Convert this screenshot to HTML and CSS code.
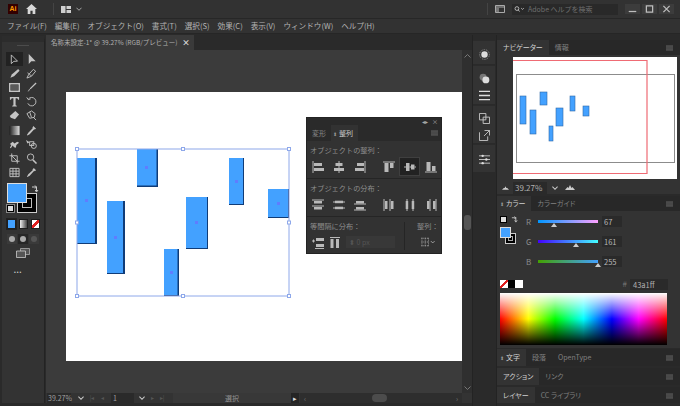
FILE: index.html
```html
<!DOCTYPE html>
<html lang="ja">
<head>
<meta charset="utf-8">
<title>Illustrator</title>
<link rel="stylesheet" href="styles.css">
</head>
<body>
<svg class="defs" width="0" height="0">
  <defs>
    <g id="a1"><path d="M1 0v12" /><rect x="2" y="2" width="8" height="3" class="f"/><rect x="2" y="7" width="10" height="3" class="f"/></g>
    <g id="a2"><path d="M6 0v12"/><rect x="2.5" y="2" width="7" height="3" class="f"/><rect x="1" y="7" width="10" height="3" class="f"/></g>
    <g id="a3"><path d="M11 0v12"/><rect x="3" y="2" width="7" height="3" class="f"/><rect x="1" y="7" width="9" height="3" class="f"/></g>
    <g id="a4"><path d="M0 1h12"/><rect x="1.5" y="2" width="4" height="9" class="f"/><rect x="7" y="2" width="3.500" height="5" class="f"/></g>
    <g id="a5"><path d="M0 6h2M10.500 6h1.500M5.500 6h1.500"/><rect x="2" y="2" width="3.500" height="8" class="f"/><rect x="7" y="3.500" width="3.500" height="5" class="f"/></g>
    <g id="a6"><path d="M0 11h12"/><rect x="1.500" y="1" width="4" height="9" class="f"/><rect x="7" y="5" width="3.500" height="5" class="f"/></g>
    <g id="d1"><path d="M0 1h12M0 7h12"/><rect x="2" y="2" width="8" height="2.500" class="f"/><rect x="2" y="8" width="8" height="2.500" class="f"/></g>
    <g id="d2"><path d="M0 3h12M0 9h12"/><rect x="2" y="1.700" width="8" height="2.500" class="f"/><rect x="2" y="7.700" width="8" height="2.500" class="f"/></g>
    <g id="d3"><path d="M0 5h12M0 11h12"/><rect x="2" y="2" width="8" height="2.500" class="f"/><rect x="2" y="8" width="8" height="2.500" class="f"/></g>
    <g id="d4"><path d="M1 0v12M7 0v12"/><rect x="2" y="2" width="2.500" height="8" class="f"/><rect x="8" y="2" width="2.500" height="8" class="f"/></g>
    <g id="d5"><path d="M3 0v12M9 0v12"/><rect x="1.700" y="2" width="2.500" height="8" class="f"/><rect x="7.700" y="2" width="2.500" height="8" class="f"/></g>
    <g id="d6"><path d="M5 0v12M11 0v12"/><rect x="2" y="2" width="2.500" height="8" class="f"/><rect x="8" y="2" width="2.500" height="8" class="f"/></g>
    <g id="burger"><path d="M0 1h9M0 3.500h9M0 6h9"/></g>
  </defs>
</svg>

<header class="titlebar">
  <span class="ai">Ai</span>
  <svg class="home" viewBox="0 0 12 11"><path d="M6 0 0 5.500h1.800V11h3V7.500h2.400V11h3V5.500H12z"/></svg>
  <span class="vsep"></span>
  <svg class="layout-ic" viewBox="0 0 10 7"><path d="M0 0h4.500v7H0zM5.500 0H10v3H5.500zM5.500 4H10v3H5.500z"/></svg>
  <svg class="chev" viewBox="0 0 7 4"><path d="M.5.500 3.500 3.500 6.500.500"/></svg>
  <span class="spacer"></span>
  <span class="vsep"></span>
  <svg class="panel-ic" viewBox="0 0 10 8"><path d="M.5.500h9v7h-9z M.5 2h9" /><path class="solid" d="M1 2.500h3V7H1z"/></svg>
  <div class="search">
    <svg viewBox="0 0 12 7"><circle cx="3" cy="3" r="2.200"/><path d="M4.500 4.500 6 6.500M8 2.500l1.500 1.500L11 2.500"/></svg>
    <span>Adobe ヘルプを検索</span>
  </div>
  <div class="winbtns">
    <svg viewBox="0 0 8 8"><path d="M1 6h6"/></svg>
    <svg viewBox="0 0 8 8"><path d="M1.500 1.500h5v5h-5z"/></svg>
    <svg viewBox="0 0 8 8"><path d="M1.500 1.500l5 5M6.500 1.500l-5 5"/></svg>
  </div>
</header>

<nav class="menubar">
  <span>ファイル(F)</span><span>編集(E)</span><span>オブジェクト(O)</span><span>書式(T)</span><span>選択(S)</span><span>効果(C)</span><span>表示(V)</span><span>ウィンドウ(W)</span><span>ヘルプ(H)</span>
</nav>

<main class="workspace">
  <aside class="toolbar">
    <div class="grip"></div>
    <div class="tools">
      <button class="tool on"><svg viewBox="0 0 12 12"><path class="ln" d="M2.500 1v9.500l2.800-2.500 4-.2z"/></svg></button>
      <button class="tool"><svg viewBox="0 0 12 12"><path d="M3 0v11l2.800-3 4.700-.2z"/></svg></button>
      <button class="tool"><svg viewBox="0 0 12 12"><path d="M10 1l1.500 2-6 6-4 1.500L3 7z"/></svg></button>
      <button class="tool"><svg viewBox="0 0 12 12"><path class="ln" d="M1 11 3 7l5-5.500 2.500 2L6 9zM2 5c1 2 2 3 4 3"/></svg></button>
      <button class="tool"><svg viewBox="0 0 12 12"><path class="ln2" d="M.8 1.800h10.400v8.400H.8z"/><path class="dim" d="M2 3h8v6H2z"/></svg></button>
      <button class="tool"><svg viewBox="0 0 12 12"><path d="M10.500.500 11.500 1.500 5 8 4 7zM3.500 7.500l1 1-2.800 2.500z"/></svg></button>
      <button class="tool"><svg viewBox="0 0 12 12"><path d="M1 1h10v3h-1L9 2.500H7.200V10L8.500 10.700V11.500h-5v-.8L4.800 10V2.500H3L2 4H1z"/></svg></button>
      <button class="tool"><svg viewBox="0 0 12 12"><path class="ln" d="M2.500 3.500A4.600 4.600 0 1 1 2 8M.8 1.500 2.500 4l2.500-.8"/></svg></button>
      <button class="tool"><svg viewBox="0 0 12 12"><path d="M7 1l4 4-4.500 5L2 8.500.8 6.500z"/></svg></button>
      <button class="tool"><svg viewBox="0 0 12 12"><path class="ln" d="M1 4 6 1l4 3-1 4-5 1zM4 2l2 6M8 8l3 3"/></svg></button>
      <button class="tool"><svg viewBox="0 0 12 12"><defs><linearGradient id="gr"><stop offset="0" stop-color="#222"/><stop offset="1" stop-color="#ddd"/></linearGradient></defs><rect x=".5" y="1" width="11" height="10" fill="url(#gr)"/></svg></button>
      <button class="tool"><svg viewBox="0 0 12 12"><path d="M8 1l3 3-1.500 1-.5-.3L4 10 1.500 11.500 1 11l1.500-2.500L7.300 3.500 7 3z"/></svg></button>
      <button class="tool"><svg viewBox="0 0 12 12"><path d="M1 5.500 4 3l2 2 3-2 2 1-3 2.500-.5 3-2-.5L4 7l-2 3-1-.5 1.500-3z"/></svg></button>
      <button class="tool"><svg viewBox="0 0 12 12"><path d="M0 1l4 2.500L1.500 5z"/><rect class="ln" x="4" y="3" width="4.500" height="4"/><circle class="ln" cx="8.500" cy="7.500" r="2.800"/></svg></button>
      <button class="tool"><svg viewBox="0 0 12 12"><path class="ln" d="M3 .5V9h8.500M.5 3H9v8.500M3 3l6 6"/></svg></button>
      <button class="tool"><svg viewBox="0 0 12 12"><circle class="ln" cx="5" cy="4.500" r="3.500"/><path class="ln2" d="M7.500 7.500 11.500 11.500"/></svg></button>
      <button class="tool"><svg viewBox="0 0 12 12"><path class="ln" d="M1 1.500h10v9H1zM1 4.500h10M1 7.500h10M4.300 1.500v9M7.700 1.500v9"/></svg></button>
      <button class="tool"><svg viewBox="0 0 12 12"><path d="M8.500 1l2.500 2.500-1.500 1-.5-.3L4 9.500 1.500 11 1 10.500l1.500-2.500L7.300 3.500 7 3z"/></svg></button>
    </div>
    <div class="swatches">
      <span class="stroke"><i></i></span>
      <span class="fill"></span>
      <svg class="swap" viewBox="0 0 8 8"><path d="M1 2h4.500v4M4 .5 5.500 2 4 3.500M4.200 5 5.500 7 7 5"/></svg>
      <span class="deflt"></span>
    </div>
    <div class="modes">
      <span class="m1"></span><span class="m2"></span>
      <span class="m3"></span>
    </div>
    <div class="draws">
      <span><i></i></span><span class="sel"><i></i></span><span class="off"><i></i></span>
    </div>
    <svg class="screen" viewBox="0 0 14 10"><path class="b" d="M4.500 .5h9v6h-9z"/><path class="c" d="M.5 3h9v6.500h-9z"/></svg>
    <div class="more">•••</div>
  </aside>

  <section class="doc">
    <div class="tabs">
      <div class="doctab"><span>名称未設定-1* @ 39.27% (RGB/プレビュー)</span><b>×</b></div>
    </div>
    <div class="stage">
      <div class="canvas">
        <svg class="art" viewBox="0 0 416 343" width="416" height="343">
          <rect x="20" y="42" width="396" height="269" fill="#fff"/>
          <g transform="translate(-46 -50)">
            <g class="bar"><rect x="77" y="158" width="20" height="86" class="bd"/><rect x="77" y="158" width="18" height="85" class="bf"/><rect x="85" y="199" width="3" height="3" class="dot"/></g>
            <g class="bar"><rect x="107" y="201" width="18" height="73" class="bd"/><rect x="107" y="201" width="16" height="72" class="bf"/><rect x="114" y="236" width="3" height="3" class="dot"/></g>
            <g class="bar"><rect x="137" y="149" width="21" height="38" class="bd"/><rect x="137" y="149" width="19.500" height="36.500" class="bf"/><rect x="145" y="166" width="3" height="3" class="dot"/></g>
            <g class="bar"><rect x="164" y="249" width="15" height="47" class="bd"/><rect x="164" y="249" width="13.500" height="46" class="bf"/><rect x="170" y="271" width="3" height="3" class="dot"/></g>
            <g class="bar"><rect x="186" y="197" width="22" height="52" class="bd"/><rect x="186" y="197" width="21" height="51" class="bf"/><rect x="195" y="221" width="3" height="3" class="dot"/></g>
            <g class="bar"><rect x="229" y="158" width="15" height="47" class="bd"/><rect x="229" y="158" width="14" height="46" class="bf"/><rect x="235" y="180" width="3" height="3" class="dot"/></g>
            <g class="bar"><rect x="268" y="189" width="21" height="29" class="bd"/><rect x="268" y="189" width="20" height="28" class="bf"/><rect x="277" y="202" width="3" height="3" class="dot"/></g>
            <rect class="sel" x="77" y="149" width="212" height="147"/>
            <g class="hnd">
              <rect x="75.500" y="147.500" width="3" height="3"/><rect x="181.500" y="147.500" width="3" height="3"/><rect x="287.500" y="147.500" width="3" height="3"/>
              <rect x="75.500" y="221" width="3" height="3"/><rect x="287.500" y="221" width="3" height="3"/>
              <rect x="75.500" y="294.500" width="3" height="3"/><rect x="181.500" y="294.500" width="3" height="3"/><rect x="287.500" y="294.500" width="3" height="3"/>
            </g>
          </g>
        </svg>

        <div class="float">
          <div class="float-top"><span>◂▸</span><span>×</span></div>
          <div class="float-tabs">
            <span class="t">変形</span><span class="t active"><em>⬍</em>整列</span>
            <svg class="burger" viewBox="0 0 9 7"><use href="#burger"/></svg>
          </div>
          <div class="sec">
            <h4>オブジェクトの整列：</h4>
            <div class="row">
              <button><svg viewBox="0 0 12 12"><use href="#a1"/></svg></button><button><svg viewBox="0 0 12 12"><use href="#a2"/></svg></button><button><svg viewBox="0 0 12 12"><use href="#a3"/></svg></button>
              <button class="gap"><svg viewBox="0 0 12 12"><use href="#a4"/></svg></button><button class="act"><svg viewBox="0 0 12 12"><use href="#a5"/></svg></button><button><svg viewBox="0 0 12 12"><use href="#a6"/></svg></button>
            </div>
          </div>
          <div class="sec">
            <h4>オブジェクトの分布：</h4>
            <div class="row">
              <button><svg viewBox="0 0 12 12"><use href="#d1"/></svg></button><button><svg viewBox="0 0 12 12"><use href="#d2"/></svg></button><button><svg viewBox="0 0 12 12"><use href="#d3"/></svg></button>
              <button class="gap"><svg viewBox="0 0 12 12"><use href="#d4"/></svg></button><button><svg viewBox="0 0 12 12"><use href="#d5"/></svg></button><button><svg viewBox="0 0 12 12"><use href="#d6"/></svg></button>
            </div>
          </div>
          <div class="sec last">
            <div class="col-a">
              <h4>等間隔に分布：</h4>
              <div class="row tight">
                <button><svg viewBox="0 0 12 12"><path d="M0 4h3M1.500 2.500v3" /><rect x="4" y="1" width="8" height="3" class="f"/><rect x="4" y="7" width="8" height="3" class="f"/><path d="M3 11.500h9"/></svg></button>
                <button><svg viewBox="0 0 12 12"><path d="M1 .5h10"/><rect x="1.500" y="2" width="3" height="9" class="f"/><rect x="7" y="2" width="3" height="9" class="f"/></svg></button>
                <div class="spin">⬍ 0 px</div>
              </div>
            </div>
            <div class="col-b">
              <h4>整列：</h4>
              <svg class="dist" viewBox="0 0 16 10"><path d="M.5 1h8M.5 5h8M.5 9h8M1 .5v9M4.500 .5v9M8 .5v9" stroke-dasharray="1 1"/><path d="M10.500 4l2 2 2-2"/></svg>
            </div>
          </div>
        </div>
      </div>
      <div class="vscroll">
        <svg viewBox="0 0 7 4"><path d="M.5 3.500 3.500.5 6.500 3.500"/></svg>
        <i></i>
        <svg viewBox="0 0 7 4"><path d="M.5.500 3.500 3.500 6.500.500"/></svg>
      </div>
    </div>
    <footer class="status">
      <span class="z">39.27%</span>
      <svg class="cv" viewBox="0 0 7 4"><path d="M.5.500 3.500 3.500 6.500.500"/></svg>
      <span class="pg dimtxt">|◂</span><span class="pg dimtxt">◂</span>
      <span class="p1">1</span>
      <svg class="cv" viewBox="0 0 7 4"><path d="M.5.500 3.500 3.500 6.500.500"/></svg>
      <span class="pg dimtxt">▸</span><span class="pg dimtxt">▸|</span>
      <span class="tool-name">選択</span>
      <span class="play">▸</span>
      <div class="hscroll"><em>‹</em><i></i><em>›</em></div>
    </footer>
  </section>

  <aside class="dock">
    <div class="dgrp g1"><svg viewBox="0 0 12 12"><circle cx="6" cy="6" r="3.500" class="s"/><circle cx="6" cy="6" r="5.300" class="dash"/></svg></div>
    <div class="dgrp g2">
      <svg viewBox="0 0 12 12"><circle cx="4.500" cy="4.500" r="3.800" class="dimf"/><circle cx="7.500" cy="7.500" r="3.800" class="s"/></svg>
      <svg viewBox="0 0 12 12"><path d="M0 1.500h12M0 6h12M0 10.500h12" class="l2"/></svg>
    </div>
    <div class="dgrp g3">
      <svg viewBox="0 0 12 12"><path d="M.5 .5h7v7h-7zM4.500 4.500h7v7h-7z" class="l"/></svg>
      <svg viewBox="0 0 12 12"><path d="M.5 2.500v9h9V7M6 .5h5.500V6M11.500 .5 5.500 6.500" class="l"/></svg>
    </div>
    <div class="dgrp g4"><svg viewBox="0 0 12 12"><path d="M0 2h12M0 6h12M0 10h12" class="l"/><circle cx="4" cy="2" r="1.300" class="s"/><circle cx="8" cy="6" r="1.300" class="s"/><circle cx="4" cy="10" r="1.300" class="s"/></svg></div>
  </aside>

  <aside class="panels">
    <div class="ptabs nav-tabs">
      <span class="pt active">ナビゲーター</span><span class="pt">情報</span>
      <svg class="burger" viewBox="0 0 9 7"><use href="#burger"/></svg>
    </div>
    <div class="navbody">
      <svg class="preview" viewBox="0 0 164 122" width="164" height="122">
        <rect width="164" height="122" fill="#fff"/>
        <g class="pv">
          <rect x="7" y="39" width="6" height="28"/><rect x="17" y="53" width="6" height="24"/><rect x="27" y="35" width="7" height="13"/>
          <rect x="36" y="69" width="4" height="15"/><rect x="43" y="51" width="7" height="18"/><rect x="57" y="39" width="5" height="15"/><rect x="70" y="49" width="6" height="10"/>
        </g>
        <rect x="3.500" y="17.500" width="158" height="88" fill="none" stroke="#8c8c8c"/>
        <path d="M0 3.500H134V116.500H0" fill="none" stroke="#ef6b74" stroke-width="1.200"/>
      </svg>
      <div class="navzoom">
        <svg class="mt" viewBox="0 0 8 4"><path d="M0 4 2 2h1l1-2 1 2h1l2 2z"/></svg>
        <span class="z2">39.27%</span>
        <svg class="cv" viewBox="0 0 7 4"><path d="M.5.500 3.500 3.500 6.500.500"/></svg>
        <svg class="mt big" viewBox="0 0 10 5"><path d="M0 5 2.500 2 3.500 3 5 0 6.500 3 7.500 2 10 5z"/></svg>
      </div>
    </div>
    <div class="ptabs color-tabs">
      <span class="pt active"><em>⬍</em>カラー</span><span class="pt">カラーガイド</span>
      <svg class="burger" viewBox="0 0 9 7"><use href="#burger"/></svg>
    </div>
    <div class="colorbody">
      <div class="cc">
        <div class="mini">
          <span class="deflt2"></span>
          <svg class="swap2" viewBox="0 0 8 8"><path d="M1 2h4.500v4M4 .5 5.500 2 4 3.500M4.200 5 5.500 7 7 5"/></svg>
          <span class="mstroke"></span><span class="mfill"></span>
        </div>
        <div class="sliders">
          <div class="sl"><label>R</label><div class="track tr"><i class="knob kr"></i></div><span class="val">67</span></div>
          <div class="sl"><label>G</label><div class="track tg"><i class="knob kg"></i></div><span class="val">161</span></div>
          <div class="sl"><label>B</label><div class="track tb"><i class="knob kb"></i></div><span class="val">255</span></div>
        </div>
      </div>
      <div class="hexrow">
        <span class="chip none"></span><span class="chip black"></span><span class="chip white"></span>
        <span class="spacer"></span>
        <span class="hash">#</span><span class="hex">43a1ff</span>
      </div>
      <div class="spectrum"></div>
    </div>
    <div class="ptabs t1"><span class="pt active"><em>⬍</em>文字</span><span class="pt">段落</span><span class="pt">OpenType</span><svg class="burger" viewBox="0 0 9 7"><use href="#burger"/></svg></div>
    <div class="ptabs t2"><span class="pt active">アクション</span><span class="pt">リンク</span><svg class="burger" viewBox="0 0 9 7"><use href="#burger"/></svg></div>
    <div class="ptabs t3"><span class="pt active">レイヤー</span><span class="pt">CC ライブラリ</span><svg class="burger" viewBox="0 0 9 7"><use href="#burger"/></svg></div>
  </aside>
</main>
</body>
</html>
```
FILE: styles.css
```css
* { box-sizing: border-box; }
html, body { margin: 0; padding: 0; }
body {
  width: 680px; height: 406px; overflow: hidden;
  background: #2a2a2a; color: #b8b8b8;
  font: 8px/1 "Noto Sans CJK JP", "Noto Sans", sans-serif;
  display: flex; flex-direction: column;
}
.defs { position: absolute; }
.defs .f, svg .f { fill: #b9b9b9; stroke: none; }
button { all: unset; display: flex; align-items: center; justify-content: center; }
em { font-style: normal; }
.spacer { flex: 1; }

.titlebar {
  height: 19px; flex: none; background: #323232; border-bottom: 1px solid #272727;
  display: flex; align-items: center; padding-left: 8px;
}
.ai { width: 10px; height: 10px; background: #330000; color: #ff9a00; font: bold 7px/10px "Liberation Sans", sans-serif; text-align: center; }
.home { width: 11px; height: 10px; fill: #d8d8d8; margin-left: 8px; }
.vsep { width: 1px; height: 12px; background: #444; margin-left: 16px; }
.layout-ic { width: 10px; height: 7px; fill: #cfcfcf; margin-left: 7px; }
.chev { width: 6px; height: 4px; fill: none; stroke: #bbb; margin-left: 5px; }
.titlebar .spacer + .vsep { margin: 0; }
.panel-ic { width: 10px; height: 8px; fill: none; stroke: #c8c8c8; stroke-width: .8; margin-left: 7px; }
.panel-ic .solid { fill: #777; stroke: none; }
.search { width: 106px; height: 11px; background: #292929; margin-left: 7px; display: flex; align-items: center; padding-left: 2px; color: #6f6f6f; font-size: 7px; }
.search svg { width: 11px; height: 6px; fill: none; stroke: #c8c8c8; margin-right: 3px; }
.winbtns { display: flex; gap: 2px; margin-left: 7px; margin-right: 6px; }
.winbtns svg { width: 15px; height: 10px; background: #3c3c3c; fill: none; stroke: #bdbdbd; }

.menubar {
  height: 15px; flex: none; background: #323232; border-bottom: 1px solid #262626;
  display: flex; align-items: center; gap: 8px; padding-left: 7px; color: #b4b4b4; font-size: 7.6px;
}

.workspace { flex: 1; display: flex; min-height: 0; padding-top: 1px; }

.toolbar { flex: none; background: #333; margin: 1px 0 3px 2px; width: 43px; display: flex; flex-direction: column; position: relative; border-top: 6px solid #2c2c2c; border-right: 1px solid #232323; }
.grip { width: 12px; height: 1px; background: #4c4c4c; margin: 3px 0 0 15px; }
.tools { display: grid; grid-template-columns: repeat(2, 17px); grid-auto-rows: 14.2px; margin: 6px 0 0 4px; }
.tool { width: 17px; height: 14.2px; }
.tool svg { width: 11px; height: 11px; fill: #c4c4c4; }
.tool.on { background: #222; }
.tool .ln { fill: none; stroke: #c4c4c4; stroke-width: 1; }
.tool .ln2 { fill: none; stroke: #c4c4c4; stroke-width: 1.600; }
.tool .dim { fill: #5a5a5a; }

.swatches { position: relative; height: 34px; margin-top: 3px; }
.fill { position: absolute; left: 5px; top: 0; width: 20px; height: 20px; background: #43a1ff; border: 1px solid #ddd; }
.stroke { position: absolute; left: 15px; top: 10px; width: 20px; height: 20px; background: #000; border: 1px solid #ccc; padding: 4px; }
.stroke i { display: block; width: 100%; height: 100%; border: 1px solid #bbb; }
.swap { position: absolute; left: 29px; top: 2px; width: 8px; height: 8px; fill: none; stroke: #ccc; }
.deflt { position: absolute; left: 5px; top: 22px; width: 7px; height: 7px; background: #ddd; border: 1px solid #000; outline: 1px solid #888; }
.modes { display: flex; gap: 2px; margin: 2px 0 0 5px; }
.modes span { width: 9px; height: 10px; border: 1px solid #1e1e1e; }
.m1 { background: #43a1ff; outline: 1px solid #222; }
.m2 { background: linear-gradient(90deg, #eee, #444); }
.m3 { background: linear-gradient(135deg, #fff 38%, #e02020 38%, #e02020 62%, #fff 62%); }
.modes span + span { margin-left: 1px; }
.draws { display: flex; gap: 1px; margin: 5px 0 0 5px; }
.draws span { width: 10px; height: 10px; display: flex; align-items: center; justify-content: center; background: #3a3a3a; }
.draws span.sel { background: #262626; }
.draws i { width: 6px; height: 6px; border-radius: 50%; background: #aaa; }
.draws .off i { background: #555; }
.screen { width: 14px; height: 10px; margin: 4px 0 0 14px; flex: none; }
.screen .b { fill: #555; stroke: #bbb; stroke-width: .7; }
.screen .c { fill: #555; stroke: #ddd; stroke-width: .7; }
.more { margin: 12px 0 0 12px; font: 5px/5px "Liberation Sans", sans-serif; letter-spacing: 1px; color: #ccc; }

.doc { width: 426px; flex: none; margin-left: 1px; display: flex; flex-direction: column; }
.tabs { height: 15px; flex: none; background: #2a2a2a; }
.doctab { width: 148px; height: 15px; background: #3a3a3a; display: flex; align-items: center; padding-left: 5px; font-size: 6.5px; color: #b0b0b0; white-space: nowrap; }
.doctab b { margin-left: auto; margin-right: 4px; color: #ddd; font-size: 8px; }
.stage { flex: 1; display: flex; min-height: 0; }
.canvas { width: 416px; background: #3b3b3b; position: relative; overflow: hidden; }
.art { display: block; }
.bd { fill: #103c78; }
.bf { fill: #43a1ff; }
.dot { fill: #5f7dff; }
.sel { fill: none; stroke: #8ea8ea; stroke-width: 1; }
.hnd rect { fill: #fff; stroke: #8ea8ea; stroke-width: 1; }

.float {
  position: absolute; left: 260px; top: 67px; width: 136px; height: 137px;
  background: #323232; border: 1px solid #232323; color: #8e8e8e;
}
.float-top { height: 7px; display: flex; justify-content: flex-end; gap: 4px; padding-right: 3px; font-size: 6px; line-height: 7px; color: #aaa; background: #2a2a2a; }
.float-tabs { height: 16px; background: #2a2a2a; display: flex; align-items: stretch; padding-left: 5px; position: relative; font-size: 7px; }
.t { display: flex; align-items: center; padding: 0 5px 0 0; color: #888; margin-right: 0; }
.t.active { background: #323232; color: #d0d0d0; padding: 0 4px 0 2px; margin: 0; width: 27px; justify-content: flex-start; }
.t em { font-size: 5px; margin-right: 2px; color: #999; }
.burger { width: 7px; height: 6px; fill: none; stroke: #7c7c7c; position: absolute; right: 3px; top: 5px; }
.sec { height: 38px; padding-top: 5px; border-bottom: 1px solid #252525; }
.sec.last { border: 0; display: flex; }
h4 { margin: 0 0 0 3px; font-weight: 400; font-size: 7.2px; line-height: 9px; color: #8e8e8e; }
.row { display: flex; margin-top: 2px; height: 19px; }
.row button { width: 21px; height: 19px; }
.row button svg { width: 12px; height: 12px; fill: none; stroke: #b9b9b9; }
.row button.gap { margin-left: 8px; }
.row button.act { background: #222; outline: 1px solid #3f3f3f; outline-offset: -1px; }
.row.tight button { width: 17px; }
.row.tight button:first-child { margin-left: 2px; }
.spin { width: 49px; height: 12px; background: #383838; margin: 3px 0 0 3px; font-size: 7px; line-height: 12px; color: #555; padding-left: 3px; }
.col-a { width: 98px; border-right: 1px solid #252525; height: 28px; }
.col-b { flex: 1; padding-left: 9px; }
.col-b h4 { margin-left: 3px; }
.dist { display: block; width: 15px; height: 10px; fill: none; stroke: #c0c0c0; stroke-width: .8; margin: 6px 0 0 7px; }

.vscroll { width: 10px; background: #2f2f2f; display: flex; flex-direction: column; align-items: center; justify-content: space-between; padding: 4px 0 3px; position: relative; }
.vscroll svg { width: 7px; height: 4px; fill: none; stroke: #777; }
.vscroll i { position: absolute; left: 2px; top: 165px; width: 7px; height: 15px; border-radius: 3px; background: #555; }

.status { height: 10px; flex: none; margin-bottom: 3px; display: flex; align-items: center; background: #333; font-size: 7px; padding-left: 1px; color: #a0a0a0; }
.z { width: 24px; height: 10px; background: #2a2a2a; line-height: 11px; padding-left: 1px; }
.cv { width: 6px; height: 4px; fill: none; stroke: #ccc; stroke-width: 1.200; margin: 0 2px 0 5px; }
.status .z + .cv { margin: 0 3px 0 7px; }
.pg { width: 10px; text-align: center; font-size: 6px; }
.dimtxt { color: #555; }
.p1 { width: 23px; height: 10px; background: #2a2a2a; line-height: 11px; padding-left: 2px; margin-left: 4px; }
.tool-name { width: 118px; text-align: center; margin-left: 6px; background: #383838; height: 10px; line-height: 10px; color: #909090; }
.play { width: 8px; text-align: center; color: #ddd; background: #252525; height: 10px; line-height: 10px; }
.hscroll { flex: 1; height: 10px; background: #2e2e2e; margin: 0 10px 0 1px; position: relative; display: flex; justify-content: space-between; align-items: center; padding: 0 4px; color: #777; }
.hscroll i { position: absolute; left: 72px; top: 1px; width: 15px; height: 8px; border-radius: 4px; background: #4c4c4c; }

.dock { width: 25px; flex: none; padding: 5px 0 0; display: flex; flex-direction: column; gap: 1px; border-left: 1px solid #232323; border-right: 1px solid #232323; background: #2a2a2a; }
.dgrp { background: #333; width: 22px; display: flex; flex-direction: column; align-items: center; gap: 6px; padding-bottom: 4px; border-top: 1px solid #2b2b2b; }
.g1 { height: 24px; padding-top: 8px; }
.g2 { height: 39px; padding-top: 6.5px; }
.g3 { height: 38px; padding-top: 6.5px; }
.g4 { height: 28px; padding-top: 8.5px; }
.dgrp svg { width: 11px; height: 11px; fill: none; flex: none; }
.dgrp .s { fill: #ddd; }
.dgrp .dimf { fill: #777; }
.dgrp .dash { stroke: #999; stroke-dasharray: 1 1; }
.dgrp .l { stroke: #c8c8c8; stroke-width: 1; }
.dgrp .l2 { stroke: #ddd; stroke-width: 1.500; }

.panels { flex: 1; display: flex; flex-direction: column; padding-top: 5px; min-width: 0; }
.ptabs { height: 15px; flex: none; background: #282828; display: flex; align-items: stretch; position: relative; color: #808080; font-size: 7px; font-feature-settings: "palt"; }
.pt { display: flex; align-items: center; padding: 0 6px; white-space: nowrap; }
.pt.active { background: #333; color: #d0d0d0; }
.pt em { font-size: 5px; margin-right: 2px; color: #999; }
.color-tabs .pt.active, .t1 .pt.active { padding-left: 3px; }
.ptabs .burger { top: 5px; right: 7px; }
.navbody { height: 139px; background: #333; padding: 2px 0 0 16px; flex: none; }
.preview { display: block; }
.pv rect { fill: #43a1ff; stroke: #2f6aa8; stroke-width: .6; }
.navzoom { display: flex; align-items: center; height: 13px; margin: 2px 0 0 -11px; }
.mt { width: 7px; height: 4px; fill: #ccc; }
.mt.big { width: 10px; height: 5px; }
.z2 { width: 34px; height: 12px; background: #2a2a2a; margin-left: 4px; padding-left: 2px; line-height: 12px; color: #b0b0b0; }
.cv + .mt { margin-left: 5px; }

.color-tabs { margin-top: 2px; }
.colorbody { height: 137px; flex: none; background: #333; padding-top: 5px; }
.cc { display: flex; height: 58px; }
.mini { position: relative; width: 25px; margin-left: 3px; flex: none; }
.deflt2 { position: absolute; left: 0; top: 0; width: 7px; height: 7px; background: #ddd; border: 1px solid #000; }
.swap2 { position: absolute; left: 11px; top: 0; width: 7px; height: 7px; fill: none; stroke: #ccc; }
.mfill { position: absolute; left: 0; top: 11px; width: 11px; height: 11px; background: #43a1ff; border: 1px solid #ddd; }
.mstroke { position: absolute; left: 5px; top: 17px; width: 11px; height: 11px; background: #000; border: 1px solid #ccc; box-shadow: inset 0 0 0 2px #000, inset 0 0 0 3px #aaa; }
.sliders { display: flex; flex-direction: column; gap: 9px; margin-left: 1px; }
.sl { display: flex; align-items: center; height: 11px; }
.sl label { width: 12px; color: #8c8c8c; font-size: 8px; }
.track { width: 60px; height: 3px; position: relative; }
.tr { background: linear-gradient(90deg, #0097ff, #ffa1ff); }
.tg { background: linear-gradient(90deg, #4300ff, #43ffff); }
.tb { background: linear-gradient(90deg, #43a100, #43a1ff); }
.knob { position: absolute; top: 3px; width: 0; height: 0; border: 3px solid transparent; border-top: 0; border-bottom: 4px solid #ccc; }
.kr { left: 13px; } .kg { left: 35px; } .kb { left: 57px; }
.val { width: 20px; height: 11px; background: #2a2a2a; margin-left: 4px; font-size: 7.5px; line-height: 11px; padding-left: 2px; }
.hexrow { display: flex; align-items: center; height: 12px; padding: 0 12px 0 3px; margin-top: 4px; }
.chip { width: 7.5px; height: 8px; }
.none { background: linear-gradient(135deg, #fff 42%, #e02020 42%, #e02020 58%, #fff 58%); }
.black { background: #000; }
.white { background: #fff; }
.hash { color: #777; margin-right: 3px; }
.hex { width: 38px; height: 11px; background: #2a2a2a; font-size: 7.5px; line-height: 11px; padding-left: 3px; color: #b0b0b0; }
.spectrum {
  width: 167px; height: 52px; margin: 3px 0 0 3px;
  background:
    linear-gradient(180deg, #fff 0%, rgba(255,255,255,0) 50%, rgba(0,0,0,0) 50%, #000 100%),
    linear-gradient(90deg, #f00, #ff0 17%, #0f0 33%, #0ff 50%, #00f 67%, #f0f 83%, #f00);
}
.t1 { height: 17px; margin-top: 1px; }
.t2 { height: 17px; margin-top: 2px; }
.t3 { height: 16px; margin-top: 2px; }
.t1 .burger, .t2 .burger, .t3 .burger { top: 6px; }
```
